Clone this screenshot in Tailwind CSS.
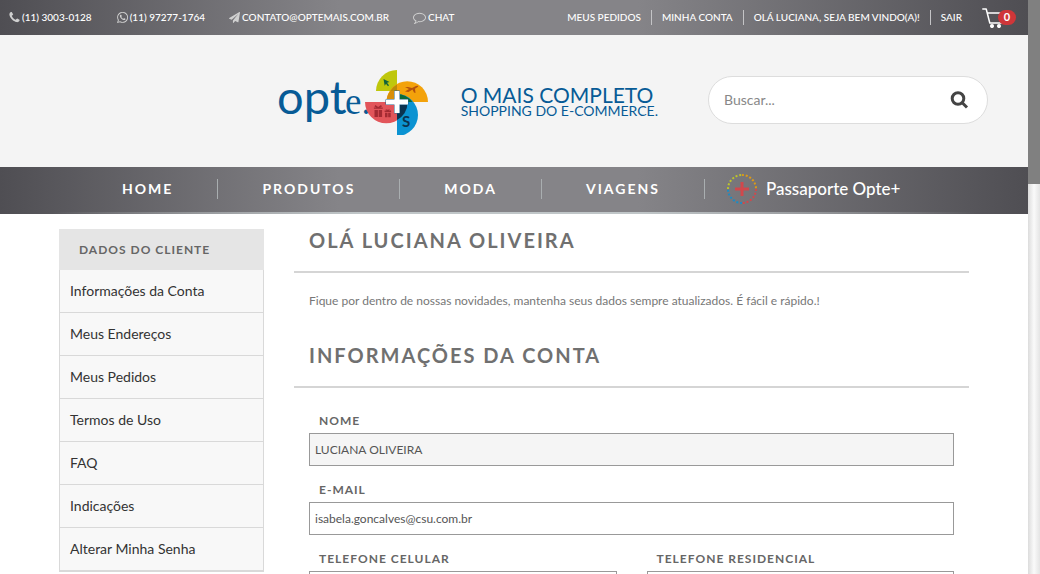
<!DOCTYPE html>
<html lang="pt-BR">
<head>
<meta charset="utf-8">
<meta name="viewport" content="width=device-width, initial-scale=1">
<title>Opte+ | Minha Conta</title>
<script src="https://cdn.jsdelivr.net/npm/@tailwindcss/browser@4"></script>
</head>
<body class="flex h-screen overflow-hidden bg-white font-['Lato',sans-serif] text-[#666]">
<div class="min-w-0 flex-1">

  <!-- Top bar -->
  <div class="flex h-[35px] items-center justify-between bg-[linear-gradient(90deg,#4f4e53,#858488_33%,#858488_62%,#4f4e53)] pr-3 pl-2 text-[10px] font-medium whitespace-nowrap text-white">
    <div class="flex items-center gap-6">
      <a href="#" class="flex items-center gap-px"><svg class="size-[13px] fill-[#d0d0d0]" viewBox="0 0 1792 1792"><path d="M1600 1240q0 27-10 70.500t-21 68.500q-21 50-122 106-94 51-186 51-27 0-53-3.500t-57.500-12.500-47-14.500-55.500-20.500-49-18q-98-35-175-83-127-79-264-216t-216-264q-48-77-83-175-3-9-18-49t-20.500-55.500-14.500-47-12.500-57.500-3.500-53q0-92 51-186 56-101 106-122 25-11 68.500-21t70.500-10q14 0 21 3 18 6 53 76 11 19 30 54t35 63.500 31 53.500q3 4 17.500 25t21.500 35.500 7 28.500q0 20-28.500 50t-62 55-62 53-28.500 46q0 9 5 22.500t8.500 20.500 14 24 11.500 19q76 137 174 235t235 174q2 1 19 11.500t24 14 20.500 8.500 22.500 5q18 0 46-28.500t53-62 55-62 50-28.500q14 0 28.500 7t35.500 21.500 25 17.500q25 15 53.500 31t63.500 35 54 30q70 35 76 53 3 7 3 21z"/></svg>(11) 3003-0128</a>
      <a href="#" class="flex items-center gap-px"><svg class="size-[13px] fill-[#d0d0d0]" viewBox="0 0 1792 1792"><path d="M1113 974q13 0 97.500 44t89.500 53q2 5 2 15 0 33-17 76-16 39-71 65.500t-102 26.500q-57 0-190-62-98-45-170-118t-148-185q-72-107-71-194v-8q3-91 74-158 24-22 52-22 6 0 18 1.500t19 1.500q19 0 26.500 6.500t15.500 27.500q8 20 33 88t25 75q0 21-34.500 57.500t-34.500 46.500q0 7 5 15 34 73 102 137 56 53 151 101 12 7 22 7 15 0 54-48.500t52-48.500zm-203 530q127 0 243.500-50t200.500-134 134-200.500 50-243.500-50-243.500-134-200.500-200.500-134-243.500-50-243.500 50-200.500 134-134 200.500-50 243.500q0 203 120 368l-79 233 242-77q158 103 345 103zm0-1382q153 0 292.500 60t240.500 161 161 240.500 60 292.500-60 292.500-161 240.500-240.500 161-292.500 60q-195 0-365-94l-417 134 136-405q-108-178-108-389 0-153 60-292.500t161-240.500 240.500-161 292.500-60z"/></svg>(11) 97277-1764</a>
      <a href="#" class="flex items-center gap-0.5"><svg class="size-[11px] fill-[#d0d0d0]" viewBox="0 0 1792 1792"><path d="M1764 11q33 24 27 64l-256 1536q-5 29-32 45-14 8-31 8-11 0-24-5l-453-185-242 295q-18 23-49 23-13 0-22-4-19-7-30.500-23.500t-11.500-36.500v-349l864-1059-1069 925-395-162q-37-14-40-55-2-40 32-59l1664-960q15-9 32-9 20 0 36 11z"/></svg>CONTATO@OPTEMAIS.COM.BR</a>
      <a href="#" class="flex items-center gap-0.5"><svg class="size-[13px] fill-[#d0d0d0]" viewBox="0 0 1792 1792"><path d="M896 384q-204 0-381.500 69.500t-282 187.500-104.500 255q0 112 71.500 213.500t201.500 175.500l87 50-27 96q-24 91-70 172 152-63 275-171l43-38 57 6q69 8 130 8 204 0 381.500-69.500t282-187.500 104.500-255-104.500-255-282-187.500-381.500-69.500zm896 512q0 174-120 321.500t-326 233-450 85.500q-70 0-145-8-198 175-460 242-49 14-114 22h-5q-15 0-27-10.500t-16-27.500v-1q-3-4-.5-12t2-10 4.500-9.500l6-9 7-8.500 8-9q7-8 31-34.500t34.500-38 31-39.500 32.500-51 27-59 26-76q-157-89-247.500-220t-90.500-281q0-174 120-321.500t326-233 450-85.500 450 85.500 326 233 120 321.500z"/></svg>CHAT</a>
    </div>
    <div class="flex items-center">
      <a href="#" class="pr-2.5">MEUS PEDIDOS</a>
      <a href="#" class="border-l border-[#c4c4c6] px-2.5">MINHA CONTA</a>
      <a href="#" class="border-l border-[#c4c4c6] px-2.5">OLÁ LUCIANA, SEJA BEM VINDO(A)!</a>
      <a href="#" class="border-l border-[#c4c4c6] px-2.5">SAIR</a>
      <a href="#" aria-label="Carrinho" class="ml-2.5 flex items-center">
        <svg class="h-5 w-[21px]" viewBox="0 0 21 20" fill="none" stroke="#fff" stroke-width="1.500" stroke-linecap="round" stroke-linejoin="round"><path d="M.8 1h3.400l3.600 14h11.500M5.500 5H20l-2 6.500"/><circle cx="10" cy="18" r="1.300" fill="#fff"/><circle cx="17" cy="18" r="1.300" fill="#fff"/></svg>
        <span class="-ml-[5px] flex h-[15px] w-[18px] items-center justify-center rounded-full bg-[#cf3639] text-[11px] font-bold">0</span>
      </a>
    </div>
  </div>

  <!-- Header -->
  <header class="flex h-[132px] items-center justify-end bg-[#f4f4f4] pr-10 pb-0.5">
    <a href="#" class="flex items-center" aria-label="Opte mais">
      <svg class="h-[70px] w-[152px]" viewBox="278 65 152 70">
        <g fill="#075b96">
          <text x="277" y="114" font-family="Lato" font-size="47">opt</text>
          <text x="345" y="114" font-family="Liberation Serif" font-size="37">e.</text>
        </g>
        <path d="M397 70v21h-21a21 21 0 0 1 21-21z" fill="#bfc70c"/>
        <path d="M386.500 102a20.500 20.500 0 0 1 41.500 0z" fill="#f3a20b"/>
        <path d="M397 84.500V91h-6.800q2-4 6.800-6.500z" fill="#b98b09"/>
        <path d="M386.500 102q0-6 3.700-11h6.800v11z" fill="#d88f0b"/>
        <path d="M365 102h42.500a21.200 21.200 0 0 1-42.500 0z" fill="#e2555a"/>
        <path d="M397 94a21 21 0 0 1 0 42z" fill="#0b93d2"/>
        <path d="M397 94q9 0 15.500 8H397z" fill="#0b6b3a"/>
        <path d="M397 102h10.500q0 12-10.500 18z" fill="#0b3350"/>
        <path d="M383.500 79l6 3-2.500.8 2 2.500-1 1-2-2.600-1.300 2z" fill="#11623c"/>
        <path d="M405 91.500l4-2.500-4-2h3l4 1 4-2q3-1 2 .8l-3 2 .5 4.200-1.500-.5-1.500-3-4 2.500z" fill="#b3510f"/>
        <path d="M374.500 110h3.400v7h-3.400zm4.200 0h3.400v7h-3.400zm-.8-1.200h-4v-1.300h2.500l-2-1 1-1.500 2.800 2 2.800-2 1 1.500-2 1h2.800v1.300zm7.100 4h2.500v4.400H385zm3.200 0h2.500v4.400h-2.500zm-3.600-2.200h2l-1.200-1.400 2.300.6 2.300-.6-1.200 1.400h2.300v1.400h-6.500z" fill="#a32a32"/>
        <text x="402" y="127" font-family="Lato" font-weight="700" font-size="15" fill="#0b3350">S</text>
        <path d="M394.500 91h5v8.500h8.500v5h-8.500v8.500h-5v-8.500H386v-5h8.500z" fill="#fff" stroke="#22638d" stroke-width="1" stroke-linejoin="round" paint-order="stroke"/>
      </svg>
      <span class="mt-0.5 ml-[31px] flex flex-col text-[#075b96]">
        <span class="text-[21px] leading-5">O MAIS COMPLETO</span>
        <span class="text-[14px] leading-3">SHOPPING DO E-COMMERCE.</span>
      </span>
    </a>
    <form class="ml-[50px] flex h-12 w-[280px] items-center rounded-full border border-[#ddd] bg-white pr-[18px] pl-[15px]">
      <input type="text" aria-label="Buscar" placeholder="Buscar..." class="min-w-0 flex-1 text-sm text-[#666] outline-none placeholder:text-[#888]">
      <button type="button" aria-label="Pesquisar" class="flex"><svg class="size-5" viewBox="0 0 20 20" fill="none" stroke="#444" stroke-width="3"><circle cx="9" cy="8.500" r="5.800"/><path d="M13 12.500l5 5"/></svg></button>
    </form>
  </header>

  <!-- Main navigation -->
  <nav class="bg-[linear-gradient(90deg,#4f4e53,#858488_33%,#858488_62%,#4f4e53)]">
    <div class="flex h-[45px] items-center pb-px pl-[78px] text-sm font-bold tracking-[2px] whitespace-nowrap text-white">
      <a href="#" class="px-11">HOME</a><span class="h-5 w-px bg-[#a9aeb0]"></span>
      <a href="#" class="px-11">PRODUTOS</a><span class="h-5 w-px bg-[#a9aeb0]"></span>
      <a href="#" class="px-11">MODA</a><span class="h-5 w-px bg-[#a9aeb0]"></span>
      <a href="#" class="px-11">VIAGENS</a><span class="h-5 w-px bg-[#a9aeb0]"></span>
      <a href="#" class="ml-[21px] flex items-center gap-2 text-[17px] font-medium tracking-normal">
        <svg class="size-8" viewBox="0 0 32 32" fill="none" stroke-width="2"><g stroke-dasharray="2 1.800"><path d="M2 16A14 14 0 0 1 16 2" stroke="#bdc52a"/><path d="M16 2a14 14 0 0 1 14 14" stroke="#dc9a17"/><path d="M30 16a14 14 0 0 1-14 14" stroke="#d0484c"/><path d="M16 30A14 14 0 0 1 2 16" stroke="#1b8cc4"/></g><path d="M16 9v14M9 16h14" stroke="#d0484c" stroke-width="3"/></svg>
        Passaporte Opte+
      </a>
    </div>
    <div class="h-0.5 bg-[linear-gradient(90deg,transparent_5%,#c0c6c8_35%,#c0c6c8_62%,transparent_95%)]"></div>
  </nav>

  <!-- Account area -->
  <div class="mx-auto flex max-w-[910px] items-start gap-[30px] pt-[15px]">
    <aside class="w-[205px] shrink-0">
      <h2 class="flex h-[41px] items-center bg-[#e5e5e5] pl-5 text-xs font-bold tracking-[1px]">DADOS DO CLIENTE</h2>
      <ul class="border-x border-b border-[#d9d9d9] bg-[#f8f8f8] text-sm text-[#333]">
        <li class="border-b border-[#d9d9d9]"><a href="#" class="flex h-[42px] items-center pl-2.5">Informações da Conta</a></li>
        <li class="border-b border-[#d9d9d9]"><a href="#" class="flex h-[42px] items-center pl-2.5">Meus Endereços</a></li>
        <li class="border-b border-[#d9d9d9]"><a href="#" class="flex h-[42px] items-center pl-2.5">Meus Pedidos</a></li>
        <li class="border-b border-[#d9d9d9]"><a href="#" class="flex h-[42px] items-center pl-2.5">Termos de Uso</a></li>
        <li class="border-b border-[#d9d9d9]"><a href="#" class="flex h-[42px] items-center pl-2.5">FAQ</a></li>
        <li class="border-b border-[#d9d9d9]"><a href="#" class="flex h-[42px] items-center pl-2.5">Indicações</a></li>
        <li class="border-b border-[#d9d9d9]"><a href="#" class="flex h-[42px] items-center pl-2.5">Alterar Minha Senha</a></li>
      </ul>
    </aside>
    <main class="min-w-0 flex-1">
      <h1 class="border-b-2 border-[#d5d5d5] pb-5 pl-[15px] text-xl leading-[22px] font-bold tracking-[2px] text-[#707070]">OLÁ LUCIANA OLIVEIRA</h1>
      <p class="mt-5 pl-[15px] text-xs leading-4 text-[#777]">Fique por dentro de nossas novidades, mantenha seus dados sempre atualizados. É fácil e rápido.!</p>
      <h1 class="mt-[35px] border-b-2 border-[#d5d5d5] pb-5 pl-[15px] text-xl leading-[22px] font-bold tracking-[2px] text-[#707070]">INFORMAÇÕES DA CONTA</h1>
      <form class="grid grid-cols-2 gap-x-[30px] gap-y-4 px-[15px] pt-[25px] text-xs">
        <div class="col-span-2 flex flex-col">
          <label for="nome" class="mb-1 pl-2.5 leading-4 font-bold tracking-[1px]">NOME</label>
          <input id="nome" type="text" value="LUCIANA OLIVEIRA" readonly class="h-[33px] border border-[#999] bg-[#f5f5f5] px-[5px] text-[#555]">
        </div>
        <div class="col-span-2 flex flex-col">
          <label for="email" class="mb-1 pl-2.5 leading-4 font-bold tracking-[1px]">E-MAIL</label>
          <input id="email" type="email" value="isabela.goncalves@csu.com.br" class="h-[33px] border border-[#999] px-[5px] text-[#555]">
        </div>
        <div class="flex flex-col">
          <label for="celular" class="mb-1 pl-2.5 leading-4 font-bold tracking-[1px]">TELEFONE CELULAR</label>
          <input id="celular" type="tel" class="h-[33px] border border-[#999] px-[5px]">
        </div>
        <div class="flex flex-col">
          <label for="residencial" class="mb-1 pl-2.5 leading-4 font-bold tracking-[1px]">TELEFONE RESIDENCIAL</label>
          <input id="residencial" type="tel" class="h-[33px] border border-[#999] px-[5px]">
        </div>
      </form>
    </main>
  </div>
</div>

<!-- Scrollbar -->
<div class="w-3 shrink-0 bg-linear-to-r from-[#dcdcdc] via-[#fafafa] via-50% to-[#e4e4e4]" aria-hidden="true">
  <div class="h-[184px] bg-[#808080]"></div>
</div>
</body>
</html>
